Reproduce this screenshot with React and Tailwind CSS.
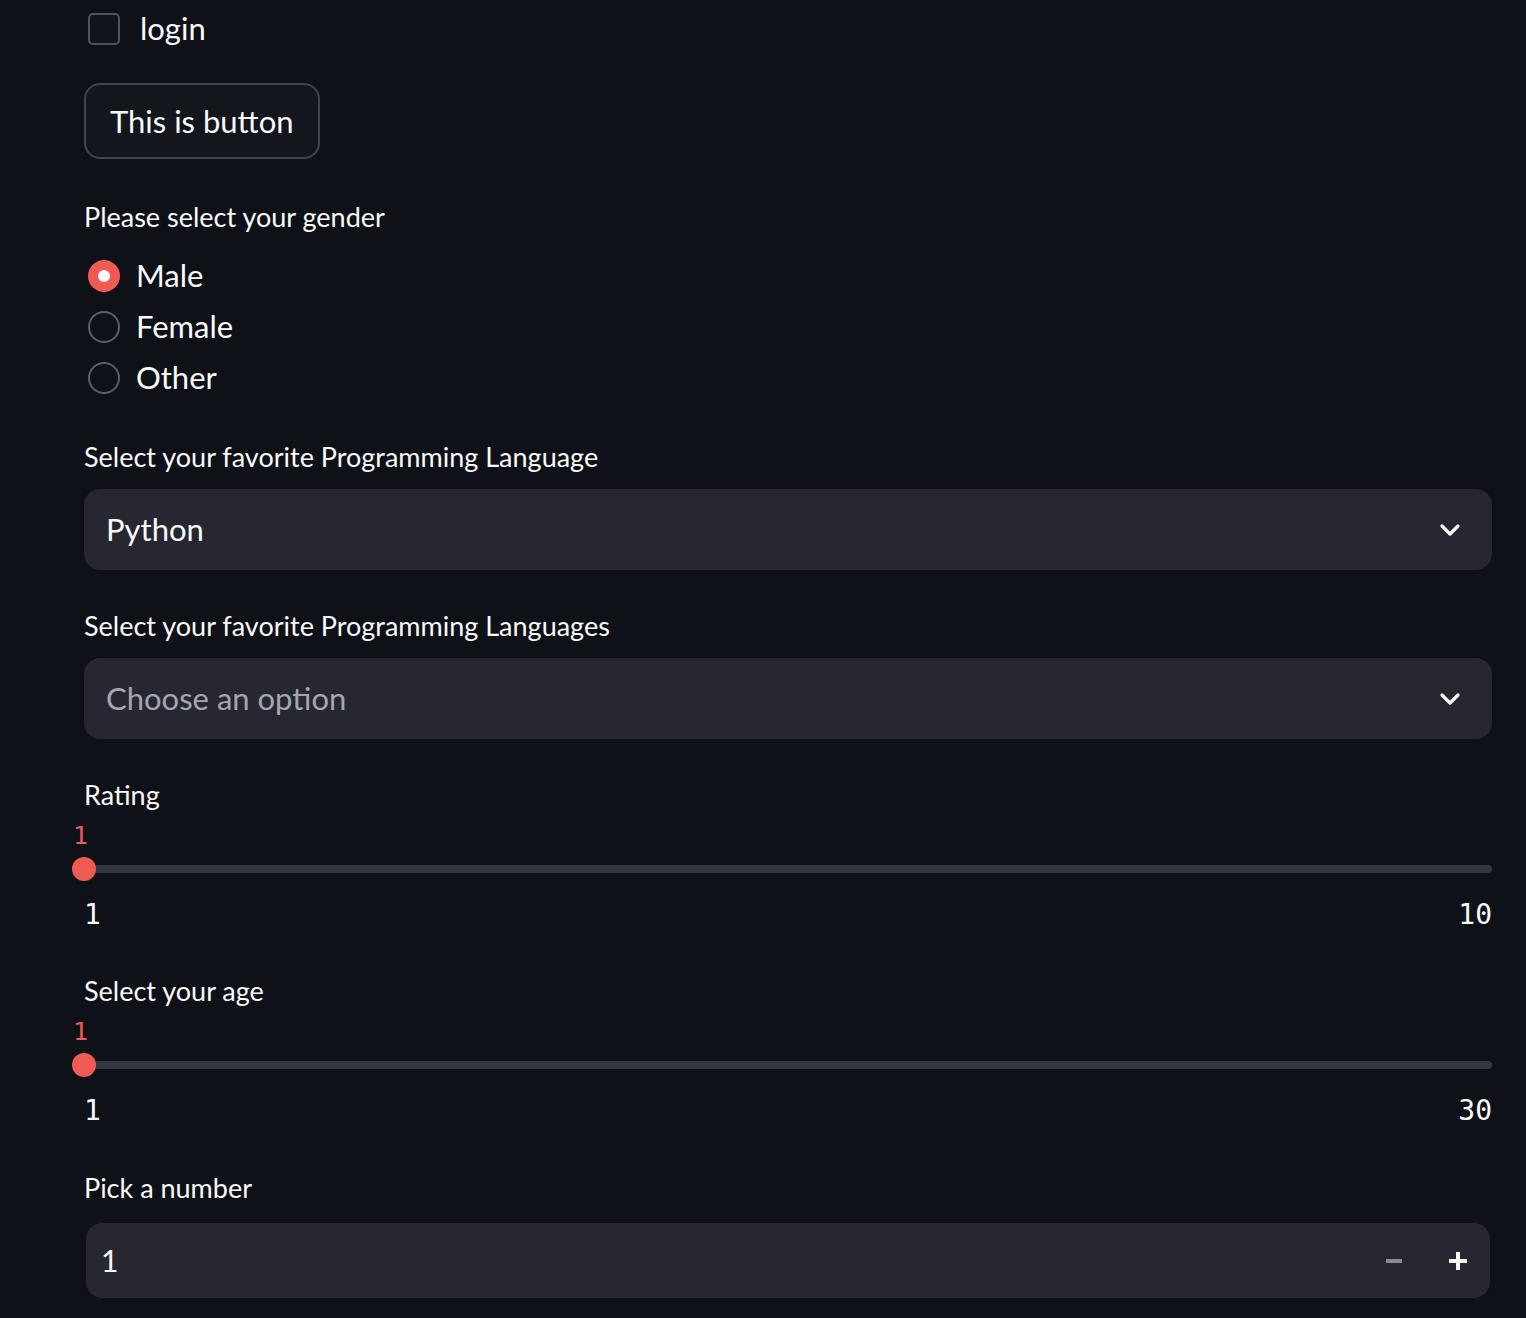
import React, { useState } from 'react';

const sans = "font-['Lato',sans-serif]";
const mono = "font-['DejaVu_Sans_Mono',monospace]";

const Label = ({ children, className = '' }) => (
  <div className={`h-[40px] flex items-center text-[27px] text-[#fafafa] ${className}`}>{children}</div>
);

const Chevron = () => (
  <svg width="24" height="24" viewBox="0 0 24 24" className="shrink-0">
    <polyline points="4,8 12,16 20,8" fill="none" stroke="#fafafa" strokeWidth="3.2" strokeLinecap="round" strokeLinejoin="round" />
  </svg>
);

const Slider = ({ value, min, max }) => (
  <div className="relative mt-[6px]">
    <div className={`h-[30px] relative ${mono}`}>
      <span className="absolute left-[-11px] top-0 h-[30px] flex items-center text-[25px] text-[#ef5b53]">{value}</span>
    </div>
    <div className="h-[36px] relative flex items-center">
      <div className="w-full h-[8px] rounded-full bg-[#34363f]" />
      <div className="absolute left-[-12px] w-[24px] h-[24px] rounded-full bg-[#ef5b53]" />
    </div>
    <div className={`mt-[10px] h-[36px] flex items-center justify-between text-[28px] text-[#fafafa] ${mono}`}>
      <span>{min}</span>
      <span>{max}</span>
    </div>
  </div>
);

const App = () => {
  const [gender, setGender] = useState('Male');
  const [login, setLogin] = useState(false);
  const [num, setNum] = useState(1);

  return (
    <div className={`min-h-[1318px] bg-[#0e1117] ${sans}`}>
      <div className="ml-[84px] w-[1408px]">
        <label className="h-[58px] flex items-center cursor-pointer">
          <span
            onClick={() => setLogin(!login)}
            className="ml-[4px] w-[32px] h-[32px] rounded-[5px] border-2 border-[#4f515b] bg-[#12141b]"
          />
          <span className="ml-[20px] text-[31px] text-[#fafafa] leading-none pb-[2px]">login</span>
        </label>

        <button className="mt-[25px] h-[76px] px-[24px] rounded-[16px] border-2 border-[#41434d] bg-[#14161e] text-[31px] text-[#fafafa]">
          This is button
        </button>

        <Label className="mt-[38px]">Please select your gender</Label>
        <div className="mt-[13px]">
          {['Male', 'Female', 'Other'].map((g) => (
            <div key={g} className="h-[51px] flex items-center cursor-pointer" onClick={() => setGender(g)}>
              {gender === g ? (
                <span className="ml-[4px] w-[32px] h-[32px] rounded-full bg-[#ef5b53] flex items-center justify-center">
                  <span className="w-[12px] h-[12px] rounded-full bg-[#fafafa]" />
                </span>
              ) : (
                <span className="ml-[4px] w-[32px] h-[32px] rounded-full border-2 border-[#5d5f68]" />
              )}
              <span className="ml-[16px] text-[31px] text-[#fafafa]">{g}</span>
            </div>
          ))}
        </div>

        <Label className="mt-[34px]">Select your favorite Programming Language</Label>
        <div className="mt-[12px] h-[81px] rounded-[16px] bg-[#262730] flex items-center justify-between pl-[22px] pr-[30px]">
          <span className="text-[31px] text-[#fafafa]">Python</span>
          <Chevron />
        </div>

        <Label className="mt-[36px]">Select your favorite Programming Languages</Label>
        <div className="mt-[12px] h-[81px] rounded-[16px] bg-[#262730] flex items-center justify-between pl-[22px] pr-[30px]">
          <span className="text-[31px] text-[#a5a7b0]">Choose an option</span>
          <Chevron />
        </div>

        <Label className="mt-[36px]">Rating</Label>
        <Slider value={1} min={1} max={10} />

        <Label className="mt-[38px]">Select your age</Label>
        <Slider value={1} min={1} max={30} />

        <Label className="mt-[39px]">Pick a number</Label>
        <div className="mt-[15px] mx-[2px] h-[75px] rounded-[16px] bg-[#262730] flex items-center pl-[15px]">
          <span className="flex-1 text-[30px] text-[#fafafa]">{num}</span>
          <button onClick={() => setNum(num - 1)} className="w-[64px] h-full flex items-center justify-center">
            <span className="w-[16px] h-[4px] bg-[#8a8b93]" />
          </button>
          <button onClick={() => setNum(num + 1)} className="w-[64px] h-full flex items-center justify-center">
            <svg width="18" height="18" viewBox="0 0 18 18">
              <rect x="7" y="0" width="4" height="18" fill="#fafafa" />
              <rect x="0" y="7" width="18" height="4" fill="#fafafa" />
            </svg>
          </button>
        </div>
      </div>
    </div>
  );
};

export default App;
